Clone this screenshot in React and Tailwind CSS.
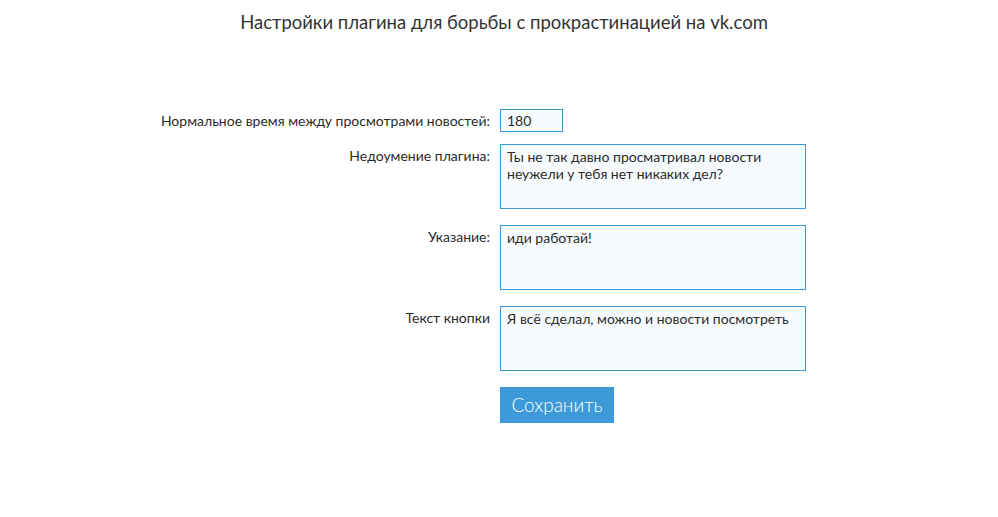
import { useState } from 'react';

const fields = [
    { label: 'Недоумение плагина:', value: 'Ты не так давно просматривал новости\nнеужели у тебя нет никаких дел?' },
    { label: 'Указание:', value: 'иди работай!' },
    { label: 'Текст кнопки', value: 'Я всё сделал, можно и новости посмотреть' },
];

export default function App() {
    const [interval, setInterval] = useState('180');
    const [texts, setTexts] = useState(fields.map((f) => f.value));

    return (
        <div className="min-h-screen bg-white text-[#2b2b2b]" style={{ fontFamily: 'Lato, "Open Sans", sans-serif' }}>
            <h1 className="pt-[11px] pl-[10px] text-center text-[18.5px] leading-[22px] font-normal text-[#333]">
                Настройки плагина для борьбы с прокрастинацией на vk.com
            </h1>

            <div className="mt-[76px] grid grid-cols-[490px_306px] gap-x-[10px] text-[14px]">
                <label className="self-center text-right leading-[17px]">Нормальное время между просмотрами новостей:</label>
                <div>
                    <input
                        value={interval}
                        onChange={(e) => setInterval(e.target.value)}
                        className="h-[23px] w-[63px] border border-[#3d9ad8] bg-[#f7fbfe] px-[6px] text-[14px] outline-none"
                    />
                </div>

                {fields.map((f, i) => (
                    <div key={i} className="contents">
                        <label className={`text-right leading-[17px] pt-[3px] ${i === 0 ? 'mt-[12px]' : 'mt-[16px]'}`}>{f.label}</label>
                        <textarea
                            value={texts[i]}
                            onChange={(e) => setTexts(texts.map((t, j) => (j === i ? e.target.value : t)))}
                            className={`h-[65px] w-[306px] resize-none border border-[#3d9ad8] bg-[#f7fbfe] px-[6px] pt-[3px] text-[14px] leading-[17px] outline-none ${i === 0 ? 'mt-[12px]' : 'mt-[16px]'}`}
                        />
                    </div>
                ))}

                <div />
                <div className="mt-[16px]">
                    <button className="h-[36px] w-[114px] bg-[#3d9ad8] text-[19px] font-light text-white">Сохранить</button>
                </div>
            </div>
        </div>
    );
}
